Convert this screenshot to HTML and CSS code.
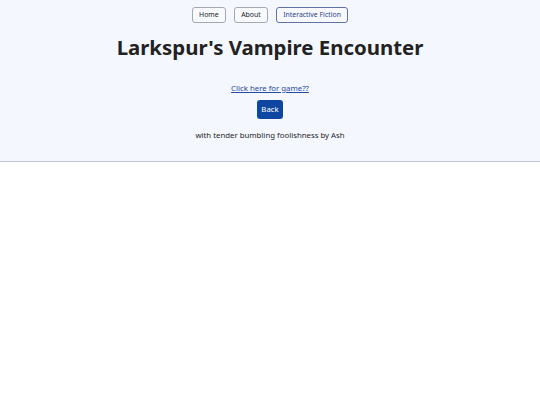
FILE: index.html
```html
<!DOCTYPE html>
<html lang="en">
<head>
<meta charset="utf-8">
<title>Larkspur's Vampire Encounter</title>
<link rel="stylesheet" href="styles.css">
</head>
<body>
<header class="masthead">
  <nav class="nav">
    <a class="nav-btn" href="#">Home</a>
    <a class="nav-btn" href="#">About</a>
    <a class="nav-btn nav-btn-active" href="#">Interactive Fiction</a>
  </nav>
  <h1 class="title">Larkspur's Vampire Encounter</h1>
  <a class="game-link" href="#">Click here for game??</a>
  <a class="back-btn" href="#">Back</a>
  <p class="credit">with tender bumbling foolishness by Ash</p>
</header>
</body>
</html>
```
FILE: styles.css
```css
html, body {
  margin: 0;
  padding: 0;
  background: #ffffff;
  font-family: "Noto Sans", "Open Sans", sans-serif;
  color: #1f1f1f;
}

.masthead {
  background: #f4f7fe;
  border-bottom: 1px solid #c3c6d2;
  display: flex;
  flex-direction: column;
  align-items: center;
  padding: 7px 0 20px;
}

.nav {
  display: flex;
  gap: 8.5px;
}

.nav-btn {
  display: block;
  font-size: 6.9px;
  line-height: 14px;
  padding: 0 6px;
  border: 1px solid #a4a8b2;
  border-radius: 3px;
  color: #222;
  text-decoration: none;
  background: #f7f9fd;
}

.nav-btn-active {
  border-color: #5f73aa;
  color: #2a428a;
}

.title {
  margin: 10px 0 0;
  font-size: 20.4px;
  line-height: 28px;
  font-weight: 700;
  color: #222;
}

.game-link {
  margin-top: 21px;
  font-size: 7.8px;
  line-height: 12px;
  color: #234a9e;
}

.back-btn {
  margin-top: 6px;
  display: block;
  font-size: 7.8px;
  line-height: 19px;
  padding: 0 4.5px;
  border-radius: 3px;
  background: #0d47a1;
  color: #ffffff;
  text-decoration: none;
}

.credit {
  margin: 10px 0 0;
  font-size: 7.8px;
  line-height: 12px;
  color: #1f1f1f;
}
```
